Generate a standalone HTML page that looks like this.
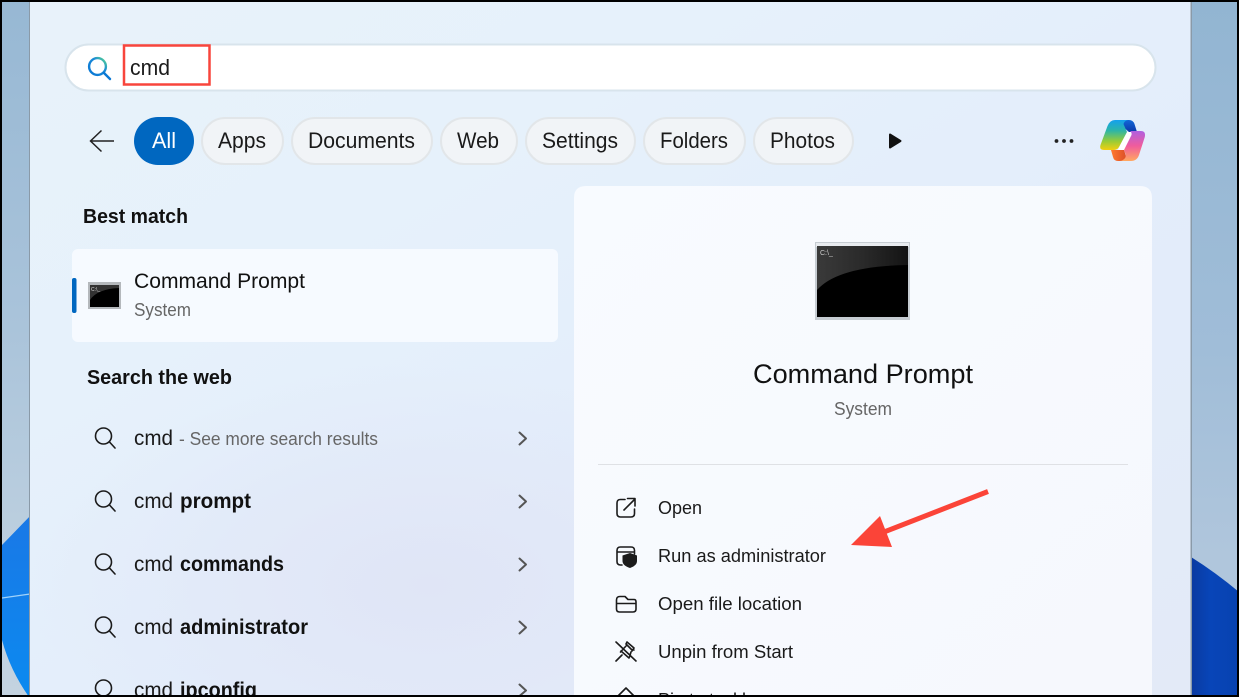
<!DOCTYPE html>
<html><head><meta charset="utf-8"><style>
html,body{margin:0;padding:0;background:#000;width:1239px;height:697px;overflow:hidden}
svg{display:block}
text{font-family:"Liberation Sans",sans-serif;fill:#1a1a1a}
.b{font-weight:bold;fill:#111}
.g{fill:#666}
.i{fill:none;stroke:#1b1b1b;stroke-width:1.6;stroke-linecap:round;stroke-linejoin:round}
</style></head><body>
<svg width="1239" height="697" viewBox="0 0 1239 697" xmlns="http://www.w3.org/2000/svg">
<defs>
<linearGradient id="win" x1="0" y1="0" x2="1" y2="1"><stop offset="0" stop-color="#e8f2fa"/><stop offset=".3" stop-color="#e6f1fb"/><stop offset=".6" stop-color="#e3edfb"/><stop offset="1" stop-color="#e3eaf7"/></linearGradient>
<radialGradient id="glow" cx="0.5" cy="0.75" r="0.5"><stop offset="0" stop-color="#e0e5f6"/><stop offset="1" stop-color="#e0e5f6" stop-opacity="0"/></radialGradient>
<linearGradient id="wl" x1="0" y1="0" x2="0" y2="1"><stop offset="0" stop-color="#97b8d4"/><stop offset=".45" stop-color="#a9c3da"/><stop offset=".78" stop-color="#bccfdf"/><stop offset="1" stop-color="#c4d3e0"/></linearGradient>
<linearGradient id="wr" x1="0" y1="0" x2="0" y2="1"><stop offset="0" stop-color="#92b5d2"/><stop offset=".5" stop-color="#a0bdd8"/><stop offset=".8" stop-color="#b0c6dc"/></linearGradient>
<linearGradient id="bl" x1="0" y1="0" x2="0" y2="1"><stop offset="0" stop-color="#1a78e6"/><stop offset="1" stop-color="#0b8af0"/></linearGradient>
<linearGradient id="br" x1="0" y1="0" x2="1" y2="0"><stop offset="0" stop-color="#0a3aa0"/><stop offset=".4" stop-color="#0845b8"/><stop offset="1" stop-color="#0742b0"/></linearGradient>
<linearGradient id="q" gradientUnits="userSpaceOnUse" x1="90" y1="74" x2="106" y2="58"><stop offset="0" stop-color="#0a78d4"/><stop offset=".6" stop-color="#1a8ad8"/><stop offset="1" stop-color="#5cdc88"/></linearGradient>
<linearGradient id="c1" gradientUnits="userSpaceOnUse" x1="0" y1="120" x2="0" y2="150"><stop offset="0" stop-color="#14a0ee"/><stop offset=".35" stop-color="#2cb5a8"/><stop offset=".7" stop-color="#96cc38"/><stop offset="1" stop-color="#f2cf10"/></linearGradient>
<linearGradient id="c2" gradientUnits="userSpaceOnUse" x1="0" y1="131" x2="0" y2="161"><stop offset="0" stop-color="#b060e0"/><stop offset=".5" stop-color="#f05c9c"/><stop offset="1" stop-color="#ffa860"/></linearGradient>
<linearGradient id="c3" x1="0" y1="0" x2="0" y2="1"><stop offset="0" stop-color="#1268d8"/><stop offset="1" stop-color="#0c38a8"/></linearGradient>
<linearGradient id="c4" x1="0" y1="0" x2="1" y2="0"><stop offset="0" stop-color="#ff7a30"/><stop offset="1" stop-color="#d84a28"/></linearGradient>
<linearGradient id="sh" x1="0" y1="0" x2="1" y2="0"><stop offset="0" stop-color="#3a3a3a"/><stop offset=".5" stop-color="#2a2a2a"/><stop offset="1" stop-color="#141414"/></linearGradient>
<linearGradient id="pane" x1="0" y1="0" x2="1" y2="1"><stop offset="0" stop-color="#f8fbff"/><stop offset="1" stop-color="#f6f8fd"/></linearGradient>
</defs>

<!-- wallpaper -->
<rect x="0" y="0" width="32" height="697" fill="url(#wl)"/>
<path d="M2 545 L32 514 V697 H29 Q10 670 2 640 Z" fill="url(#bl)"/>
<path d="M2 598 L30 594" stroke="#9fd2fa" stroke-width="1.2"/>
<rect x="1189" y="0" width="50" height="697" fill="url(#wr)"/>
<path d="M1191 557 Q1215 572 1239 592 V697 H1191 Z" fill="url(#br)"/>

<!-- window -->
<rect x="29" y="0" width="1" height="697" fill="#8a9aa8"/>
<rect x="1190.500" y="0" width="1.500" height="697" fill="#8a9aa8"/>
<rect x="30" y="0" width="1160.500" height="697" fill="url(#win)"/>
<rect x="30" y="250" width="800" height="447" fill="url(#glow)"/>

<!-- search -->
<rect x="65.500" y="44.500" width="1090" height="46" rx="23" fill="#fff" stroke="#d8e4ec" stroke-width="2"/>
<circle cx="97.500" cy="66.500" r="8.400" fill="none" stroke="url(#q)" stroke-width="2.400"/>
<path d="M104 73 L110 79" stroke="#0a78d4" stroke-width="2.400" stroke-linecap="round"/>
<text x="130" y="75" font-size="22" textLength="40" lengthAdjust="spacingAndGlyphs">cmd</text>
<rect x="124" y="45.500" width="85.500" height="39" fill="none" stroke="#f8453c" stroke-width="2.500"/>

<!-- tabs row -->
<path d="M114 141 H91 M101.500 130.500 L90.500 141 L101.500 151.500" fill="none" stroke="#222" stroke-width="1.500"/>
<rect x="134" y="117" width="60" height="48" rx="24" fill="#0067c0"/>
<text x="152" y="148" font-size="22" style="fill:#fff" textLength="24" lengthAdjust="spacingAndGlyphs">All</text>
<g fill="#f1f4f7" stroke="#e2e6e9" stroke-width="2">
<rect x="202" y="118" width="81" height="46" rx="23"/>
<rect x="292" y="118" width="140" height="46" rx="23"/>
<rect x="441" y="118" width="76" height="46" rx="23"/>
<rect x="526" y="118" width="109" height="46" rx="23"/>
<rect x="644" y="118" width="101" height="46" rx="23"/>
<rect x="754" y="118" width="99" height="46" rx="23"/>
</g>
<g font-size="22">
<text x="218" y="148" textLength="48" lengthAdjust="spacingAndGlyphs">Apps</text>
<text x="308" y="148" textLength="107" lengthAdjust="spacingAndGlyphs">Documents</text>
<text x="457" y="148" textLength="42" lengthAdjust="spacingAndGlyphs">Web</text>
<text x="542" y="148" textLength="76" lengthAdjust="spacingAndGlyphs">Settings</text>
<text x="660" y="148" textLength="68" lengthAdjust="spacingAndGlyphs">Folders</text>
<text x="770" y="148" textLength="65" lengthAdjust="spacingAndGlyphs">Photos</text>
</g>
<path d="M890 134.500 L900.500 141 L890 147.500 Z" fill="#111" stroke="#111" stroke-width="2" stroke-linejoin="round"/>
<circle cx="1056.500" cy="141" r="1.900" fill="#222"/><circle cx="1064" cy="141" r="1.900" fill="#222"/><circle cx="1071.500" cy="141" r="1.900" fill="#222"/>

<!-- copilot -->
<path d="M1126 132 H1133 L1125 150 H1118 Z" fill="#fff"/>
<path d="M1120 120 H1129 Q1133 120 1134.500 124 L1137 132 H1129 L1122 126 Z" fill="url(#c3)"/>
<path d="M1111 150 H1124 L1126 156 L1128 161 H1118 Q1114 161 1113 157 Z" fill="url(#c4)"/>
<path d="M1115 120 H1128 Q1124.500 120.500 1123.500 124 L1127 132 L1119 147 Q1117.500 150 1113 150 H1104 Q1099 150 1100.500 145 L1107.500 126 Q1110 120 1115 120 Z" fill="url(#c1)"/>
<path d="M1130 131 H1141 Q1146 131 1144.800 137 L1139 155 Q1137 161 1131 161 H1120 Q1125.500 160 1126 155 L1124 150 L1131.500 135 Q1132 132.500 1130 131 Z" fill="url(#c2)"/>

<!-- left list -->
<text class="b" x="83" y="223" font-size="20" textLength="105" lengthAdjust="spacingAndGlyphs">Best match</text>
<rect x="72" y="249" width="486" height="93" rx="6" fill="#f6faff"/>
<rect x="72" y="278" width="4.500" height="35" rx="2" fill="#0067c0"/>
<rect x="88" y="282" width="33" height="27" fill="#b4b8bc"/>
<rect x="90" y="285" width="29" height="22" fill="#000"/>
<path d="M90 300 Q97 289 119 288 V285 H90 Z" fill="#333"/>
<text x="91" y="291" font-size="5" style="fill:#ddd">C:\_</text>
<text x="134" y="288" font-size="21" textLength="171" lengthAdjust="spacingAndGlyphs" style="fill:#111">Command Prompt</text>
<text class="g" x="134" y="316" font-size="18" textLength="57" lengthAdjust="spacingAndGlyphs">System</text>
<text class="b" x="87" y="384" font-size="20" textLength="145" lengthAdjust="spacingAndGlyphs">Search the web</text>

<g fill="none" stroke="#1b1b1b" stroke-width="1.600" stroke-linecap="round">
<circle cx="103.500" cy="436" r="8"/><path d="M109.500 442 L115 448"/>
<circle cx="103.500" cy="499" r="8"/><path d="M109.500 505 L115 511"/>
<circle cx="103.500" cy="562" r="8"/><path d="M109.500 568 L115 574"/>
<circle cx="103.500" cy="625" r="8"/><path d="M109.500 631 L115 637"/>
<circle cx="103.500" cy="688" r="8"/>
</g>
<g fill="none" stroke="#555" stroke-width="2" stroke-linecap="round" stroke-linejoin="round">
<path d="M519.500 432.500 L526 438.500 L519.500 444.500"/>
<path d="M519.500 495.500 L526 501.500 L519.500 507.500"/>
<path d="M519.500 558.500 L526 564.500 L519.500 570.500"/>
<path d="M519.500 621.500 L526 627.500 L519.500 633.500"/>
<path d="M519.500 684.500 L526 690.500 L519.500 696"/>
</g>
<g font-size="21">
<text x="134" y="445" textLength="39" lengthAdjust="spacingAndGlyphs">cmd</text>
<text class="g" x="179" y="445" font-size="18" textLength="199" lengthAdjust="spacingAndGlyphs">- See more search results</text>
<text x="134" y="508" textLength="39" lengthAdjust="spacingAndGlyphs">cmd</text>
<text class="b" x="180" y="508" textLength="71" lengthAdjust="spacingAndGlyphs">prompt</text>
<text x="134" y="571" textLength="39" lengthAdjust="spacingAndGlyphs">cmd</text>
<text class="b" x="180" y="571" textLength="104" lengthAdjust="spacingAndGlyphs">commands</text>
<text x="134" y="634" textLength="39" lengthAdjust="spacingAndGlyphs">cmd</text>
<text class="b" x="180" y="634" textLength="128" lengthAdjust="spacingAndGlyphs">administrator</text>
<text x="134" y="697" textLength="39" lengthAdjust="spacingAndGlyphs">cmd</text>
<text class="b" x="180" y="697" textLength="77" lengthAdjust="spacingAndGlyphs">ipconfig</text>
</g>

<!-- right pane -->
<path d="M574 697 V198 Q574 186 586 186 H1140 Q1152 186 1152 198 V697 Z" fill="url(#pane)"/>
<rect x="815" y="242" width="95" height="78" fill="#c6ccd2"/>
<rect x="816" y="243" width="93" height="4" fill="#e8ebef"/>
<rect x="817" y="246" width="91" height="71" fill="#000"/>
<path d="M817 290 Q838 266 908 265 V246 H817 Z" fill="url(#sh)"/>
<text x="820" y="255" font-size="7" style="fill:#ccc">C:\_</text>
<text x="753" y="383" font-size="27" textLength="220" lengthAdjust="spacingAndGlyphs" style="fill:#111">Command Prompt</text>
<text class="g" x="834" y="415" font-size="18" textLength="58" lengthAdjust="spacingAndGlyphs">System</text>
<rect x="598" y="464" width="530" height="1" fill="#dfe1e5"/>

<!-- actions -->
<g class="i">
<path d="M625 499.500 H620.500 Q617 499.500 617 503 V513.500 Q617 517 620.500 517 H631 Q634.500 517 634.500 513.500 V509"/>
<path d="M624 510 L634.500 499.500 M627.500 498.500 H635 V506"/>
<path d="M622 565 H620.500 Q617 565 617 561.500 V550.500 Q617 547 620.500 547 H631 Q634.500 547 634.500 550.500 V554 M617 552 H634.500"/>
<path d="M616.500 609 V600 Q616.500 596.500 620 596.500 H625 L628 599.500 H634 Q636 599.500 636 602 V609 Q636 612 633 612 H619.500 Q616.500 612 616.500 609 Z M616.500 603.500 H636"/>
<path d="M616 642 L636 661 M626 644 L632 650 L634 650 M626 644 L627 642 L634 648 L632 651 M620.500 652 L626 646 M621 651 L629 658 M622 655 L616 661 M629.500 657 L631 652"/>
<path d="M626 688 L618 696 M626 688 L634 696"/>
</g>
<path d="M622.500 555.500 L630 553 L637 555.500 V561 Q637 565.500 630 568 Q622.500 565.500 622.500 561 Z" fill="#1b1b1b"/>
<g font-size="18" style="fill:#1a1a1a">
<text x="658" y="514" textLength="44" lengthAdjust="spacingAndGlyphs">Open</text>
<text x="658" y="562" textLength="168" lengthAdjust="spacingAndGlyphs">Run as administrator</text>
<text x="658" y="610" textLength="144" lengthAdjust="spacingAndGlyphs">Open file location</text>
<text x="658" y="658" textLength="135" lengthAdjust="spacingAndGlyphs">Unpin from Start</text>
<text x="658" y="706" textLength="110" lengthAdjust="spacingAndGlyphs">Pin to taskbar</text>
</g>

<!-- arrow -->
<path d="M988 491.500 L884 532" stroke="#fb4438" stroke-width="5"/>
<path d="M851 545 L880 516 L892 547 Z" fill="#fb4438"/>

<!-- black frame -->
<rect x="0" y="0" width="1239" height="2" fill="#000"/>
<rect x="0" y="695" width="1239" height="2" fill="#000"/>
<rect x="0" y="0" width="2" height="697" fill="#000"/>
<rect x="1237" y="0" width="2" height="697" fill="#000"/>
</svg>
</body></html>
